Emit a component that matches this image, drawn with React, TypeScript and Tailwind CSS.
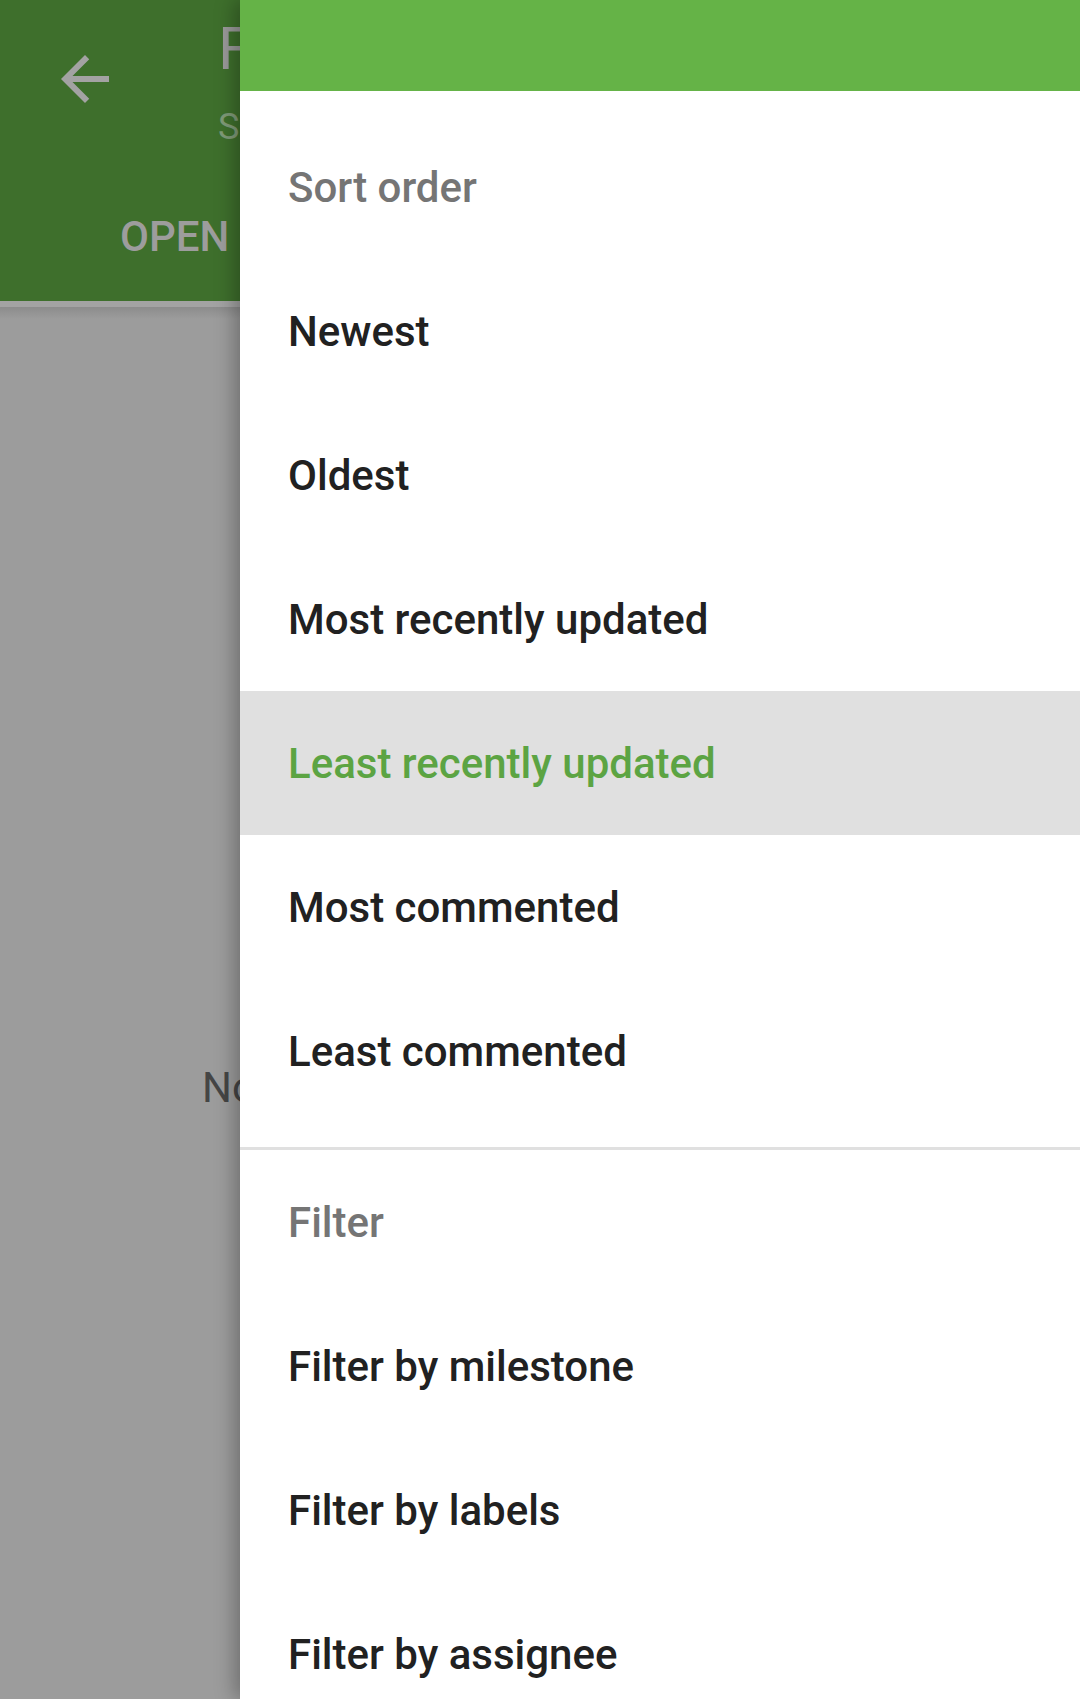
const sortItems = [
  "Newest",
  "Oldest",
  "Most recently updated",
  "Least recently updated",
  "Most commented",
  "Least commented",
];
const filterItems = ["Filter by milestone", "Filter by labels", "Filter by assignee"];
const activeSort = "Least recently updated";

function NavRow({ label, active }: { label: string; active?: boolean }) {
  return (
    <div
      className={
        active
          ? "flex h-[144px] shrink-0 items-center bg-[#e0e0e0] pl-[48px] text-[42px] font-medium text-[#5ca443]"
          : "flex h-[144px] shrink-0 items-center pl-[48px] text-[42px] font-medium text-[#212121]"
      }
    >
      {label}
    </div>
  );
}

function Subheader({ label }: { label: string }) {
  return (
    <div className="flex h-[144px] shrink-0 items-center pl-[48px] text-[42px] font-medium text-[#757575]">
      {label}
    </div>
  );
}

export default function App() {
  return (
    <div className="relative h-[1699px] w-[1080px] overflow-hidden bg-[#9c9c9c] font-['Roboto',sans-serif]">
      {/* dimmed screen behind the drawer, only the left strip shows */}
      <div className="flex h-full flex-col">
        <div className="flex h-[301px] shrink-0 flex-col bg-[#3e6f2c]">
          <div className="flex items-start">
            <svg viewBox="0 0 24 24" className="ml-[49px] mt-[43px] h-[72px] w-[72px] shrink-0" fill="#a3a3a3">
              <path d="M20 11H7.83l5.59-5.59L12 4l-8 8 8 8 1.41-1.41L7.83 13H20v-2z" />
            </svg>
            <div className="ml-[97px] flex w-[22px] flex-col overflow-hidden whitespace-nowrap">
              <span className="mt-[14px] text-[60px] leading-[70px] text-[#9a9a9a]">Feedback</span>
              <span className="mt-[22px] text-[36px] leading-[42px] text-[#7f9a78]">Sort and filter</span>
            </div>
          </div>
          <div className="mt-[64px] flex">
            <span className="pl-[120px] text-[42px] font-medium leading-[49px] text-[#9d9d9d]">OPEN</span>
          </div>
        </div>
        <div className="h-[6px] shrink-0 bg-[#a3a3a3]" />
        <div className="relative flex-1 bg-[#9c9c9c]">
          <div className="h-[12px] bg-gradient-to-b from-[#8c8c8c] to-[#9c9c9c]" />
          <div className="mt-[744px] w-[240px] overflow-hidden whitespace-nowrap pl-[202px] text-[42px] leading-[49px] text-[#454545]">
            No
          </div>
        </div>
      </div>

      {/* navigation drawer */}
      <div className="absolute bottom-0 left-[240px] right-0 top-0 flex flex-col bg-white shadow-[-6px_0_18px_rgba(0,0,0,0.28)]">
        <div className="h-[91px] shrink-0 bg-[#65b347]" />
        <div className="h-[24px] shrink-0" />
        <Subheader label="Sort order" />
        {sortItems.map((s) => (
          <NavRow key={s} label={s} active={s === activeSort} />
        ))}
        <div className="h-[24px] shrink-0" />
        <div className="h-[3px] shrink-0 bg-[#e0e0e0]" />
        <Subheader label="Filter" />
        {filterItems.map((s) => (
          <NavRow key={s} label={s} />
        ))}
      </div>
    </div>
  );
}
